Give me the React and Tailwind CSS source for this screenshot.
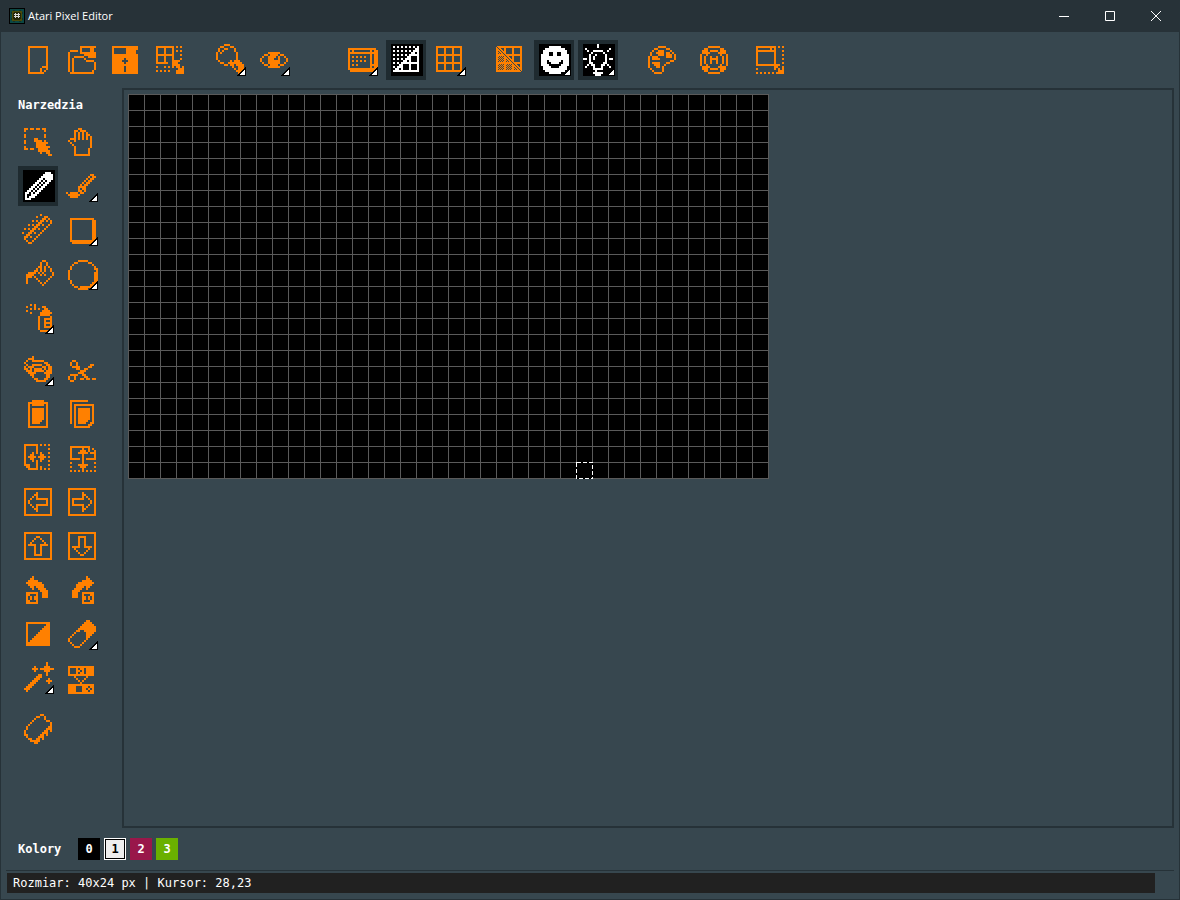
// File: App.jsx
// Purpose: Main window of the Atari Pixel Editor (title bar, toolbar, tools, canvas, colors, status)
import { useState } from 'react';
import clsx from 'clsx';

const COLS = 40;
const ROWS = 24;
const CELL = 16;

// 16x16 bitmaps, "#" is a lit pixel. Missing tail of a row / missing rows are empty.
const ICONS = {
    newFile: ['', '...##########', '...#........#', '...#........#', '...#........#', '...#........#', '...#........#', '...#........#', '...#........#', '...#........#', '...#........#', '...#......###', '...#.....#..#', '...#.....#.#', '...########'],
    open: ['', '.......########', '.......#....##', '..####.#....##', '.#.....########', '.#.......######', '.#..#####..####', '.#.#.....#', '.#.#......####', '.#.#..........#', '.#.#..........#', '.#.#..........#', '.#.#..........#', '.#.#.........#', '..############'],
    save: ['', '.#############', '.#......######', '.#......#####', '.#......#####', '.#############', '.#############', '.######.######', '.#####...#####', '.######.######', '.#############', '.######.######', '.######.######', '.######.######', '.#############'],
    resize: ['', '.#########.#.#', '.#...#...#', '.#...#...#.#.#', '.#...#...#', '.#########...#', '.#...#...#', '.#...#...#...#', '.#...#...####', '.######..###', '.........####', '.#...#.#.#.##.#', '............###', '.#.#.#.#...####', '...........####'],
    zoom: ['.....###', '...##...##', '..#..##...#', '..#.#.....#', '.#.#.......#', '.#.........#', '.#.........#', '.#.........#', '..#.....#.###', '...##..#######', '.....##.##.####', '.........#..###', '..........#.####', '...........#####', '............###'],
    eye: ['', '', '', '', '.....######', '...##.####.##', '..#..####.#..#', '.#...###..#...#', '.#...######...#', '..#..######..#', '...##.####.##', '.....######'],
    keyboard: ['', '', '.##############', '.#.#........#.##', '.###############', '.#..........#.##', '.#.#.#.#.#..#.##', '.#..........#.##', '.#.#.#.#.#..#.##', '.#..........#.##', '.#.#.#......####', '.#..........#.##', '.###############', '..##############'],
    snap: ['', '.#.#.#.#.#.#.#', '............##', '.#.#.#.#.#.###', '..........##.#', '.#.#.#.#.#####', '........##...#', '.#.#.#.###...#', '......##.#...#', '.#.#.#########', '....##...#...#', '.#.###...#...#', '..##.#...#...#', '.#############'],
    grid: ['', '.#############', '.#...#...#...#', '.#...#...#...#', '.#...#...#...#', '.#############', '.#...#...#...#', '.#...#...#...#', '.#...#...#...#', '.#############', '.#...#...#...#', '.#...#...#...#', '.#...#...#...#', '.#############'],
    smile: ['', '.....######', '...##########', '..############', '..###..##..###', '.####..##..####', '.##############', '.##############', '.###.######.###', '.###..####..###', '.####......####', '..####....####', '..############', '...##########', '.....######'],
    bulb: ['.......#', '.......#', '.#...........#', '..#..#####..#', '....#.....#', '...#..#....#', '...#.#.....#', '##.#.#.....#.##', '...#.......#', '...##.....##', '..#.##...##.#', '.#...#...#...#', '.....#####', '......#', '.....#####', '......###'],
    palette: ['', '......####', '....##....##', '...#..###...#', '..#..####.##.#', '..#...###.###.#', '.#.###....###.#', '.#.####.......#', '.#..........##', '.#.####...##', '.#..###..#', '.#...##.#', '..#.....#', '...#....#', '....####'],
    help: ['', '.....######', '...##......##', '..###.####.###', '..####....####', '.#..#......#..#', '.#.#..#..#..#.#', '.#.#..####..#.#', '.#.#..#..#..#.#', '.#.#..#..#..#.#', '.#..#......#..#', '..####....####', '..###.####.###', '...##......##', '.....######'],
    windowSize: ['', '.##########.#.#', '.#......#.#', '.##########...#', '.#........#', '.#........#...#', '.#........#', '.#........#...#', '.#........#', '.#........#...#', '.############', '..........##..#', '.#........#.#.#', '............###', '.#.#.#.#.#.####'],
    select: ['', '.##.##.##.##', '.#.........#', '', '.#.........#', '.#.........#', '......##', '.#....####.#', '.#.....######', '.......#####', '.#.....#######', '.##.##..#####', '........######', '.........#..##', '.............##'],
    hand: ['', '......##', '....##.###', '....#.#.#.#', '....#.#.#.##', '....#.#.#.#.#', '..###.#.#.#.#', '.#..#.......#', '..#.........#', '...#........#', '....#.......#', '....#......#', '....#......#', '....#......#', '....########'],
    pencil: ['', '...........###', '..........#####', '.........######', '........##.####', '.......##.#.##', '......##.#.##', '.....##.#.##', '....##.#.##', '...##.#.##', '..##.#.##', '.##.#.##', '.#..###', '.#.###', '.###'],
    brush: ['', '', '............##', '...........#.##', '..........#.##', '.........#.##', '........#.##', '.......#.##', '......####', '......#.##', '......##.#', '#.####.##', '.######', '..####'],
    ruler: ['.........#', '.......#...##', '..........##.#', '.....#.#.##.#.#', '........##....#', '...#.#.##.#..#', '......##....#', '.#.#.##.#..#', '....##....#', '#..##.#..#', '..##....#', '.##.#..#', '.#....#', '..#..#', '...##'],
    rect: ['', '', '..############', '..#..........##', '..#..........##', '..#..........##', '..#..........##', '..#..........##', '..#..........##', '..#..........##', '..#..........##', '..#..........##', '..#..........##', '..#############', '...############'],
    bucket: ['', '..........##', '.........#..#', '.........#..#', '........##.#.#', '.......#.#.#..#', '......##.#.#..#', '...####.#.#....#', '..####...#.#...#', '..###.#.......#', '..#....#.....#', '..#.....#...#', '..#......#.#', '..........#'],
    circle: ['', '......#####', '....##.....##', '...#.........#', '..#...........#', '..#...........##', '.#.............#', '.#............##', '.#............##', '.#............##', '.#............##', '..#...........##', '..#..........###', '...#........###', '....##.######', '......#####'],
    spray: ['', '....#.#', '..#...#...##', '....#.#.#..##', '..#.......####', '....#....######', '.........#####', '........#.....#', '........#..####', '........#..#..#', '........#..####', '........#..#..#', '........#..####', '........#', '.........####'],
    undo: ['', '.....#', '...###', '..#..######', '.#.........##', '..#..#####..##', '.#.###....##.##', '.##.#.####.#.##', '..###.#####.###', '...####....####', '....##......##', '.....#......##', '......##...##', '.......#####'],
    cut: ['', '', '', '...##', '..#..#', '..#..#......##', '...####....##', '.....##..##', '.......###', '......###', '..####..##', '.#..#....##', '.#..#..##.##.##', '..##'],
    paste: ['', '.....######', '...##########', '...#.######.#', '...#........#', '...#.######.#', '...#.######.#', '...#.######.#', '...#.######.#', '...#.######.#', '...#.######.#', '...#.#####..#', '...#.####...#', '...#........#', '...##########'],
    copy: ['', '..#########', '..#', '..#.##########', '..#.#........#', '..#.#.######.#', '..#.#.######.#', '..#.#.######.#', '..#.#.######.#', '..#.#.######.#', '..#.#.######.#', '..#.#.#####..#', '..#.#.####..##', '....#......##', '....########'],
    flipH: ['', '.#######.#.#.#', '.#.....#', '.#.....#.....#', '.#.....#', '.#...#.#.#...#', '.#..##...##', '.#.####.####.#', '.#..##...##', '.#...#.#.#...#', '.#.....#', '.###...#.....#', '..##...#.#', '...#####.#.#.#'],
    flipV: ['', '', '..##########', '..#.....#..#.#', '..#....###.#..#', '..#...#####.###', '..#.....#.....#', '..#.....#.....#', '..#####.#.#####', '........#', '..#.....#.....#', '......#####', '..#....###....#', '........#', '..#.#.#.#.#.#.#'],
    arrow: ['', '.##############', '.#............#', '.#.....#......#', '.#....##......#', '.#...#.#......#', '.#..#..######.#', '.#.#........#.#', '.#.#........#.#', '.#..#..######.#', '.#...#.#......#', '.#....##......#', '.#.....#......#', '.#............#', '.##############'],
    rotate: ['', '.....#', '....##', '...#####', '..########', '...########', '....##.####', '.....#..####', '.........####', '..######..###', '..##...#..###', '..#.#.##..###', '..#.#.##', '..##...#', '..######'],
    invert: ['', '', '..############', '..#.........##', '..#........###', '..#.......####', '..#......#####', '..#.....######', '..#....#######', '..#...########', '..#..#########', '..#.##########', '..############', '..############'],
    eraser: ['', '..........##', '.........####', '........######', '.......########', '......#########', '.....##..######', '....#.....####', '...#......###', '..#.......##', '.#........#', '.#.......#', '..#.....#', '...#...#', '....###'],
    wand: ['............#', '............#', '......#....###', '.....###.#######', '......#....###', '............#', '........##..#', '.......###', '......###....#', '.....###....###', '....###......#', '...###', '..###', '.###', '..#'],
    swap: ['', '', '.#############', '.#...#.##.####', '.#...##.#.####', '.#...#.##.####', '.#############', '....#.....#', '.....#...#', '......#.#', '.......#', '.#############', '.####...###.##', '.####...##.#.#', '.####...###.##', '.#############'],
    clear: ['', '.........##', '.......##..#', '......#....#', '.....#......##', '....#.........#', '...#..........#', '..#..........##', '..#.........###', '.#.........##.#', '.#........###', '.##......##.#', '..#.....###', '...##..##.#', '....#####', '......##'],
};

// One path per icon, built from horizontal runs of lit pixels
const toPath = (rows) => {
    let d = '';
    rows.forEach((row, y) => {
        for (const run of row.matchAll(/#+/g)) {
            const n = run[0].length;
            d += `M${run.index} ${y}h${n}v1h-${n}z`;
        }
    });
    return d;
};

// Mixed grid icon uses single screen pixels instead of double ones
const mixedGridPath = () => {
    let d = '';
    for (let y = 0; y < 26; y++) {
        for (let x = 0; x < 26; x++) {
            const line = (x >> 1) % 4 === 0 || (y >> 1) % 4 === 0;
            const lower = y > x && (x + y) % 2 === 0;
            const near = Math.abs(x - y) <= 2;
            if (x !== y && (near || line || lower)) {
                d += `M${x + 2} ${y + 2}h1v1h-1z`;
            }
        }
    }
    return d;
};

const TOOLBAR = [
    { id: 'newFile', label: 'Nowy' },
    { id: 'open', label: 'Otworz' },
    { id: 'save', label: 'Zapisz' },
    { id: 'resize', label: 'Zmien rozmiar' },
    { id: 'zoom', label: 'Powieksz', menu: true, space: 'ml-4' },
    { id: 'eye', label: 'Podglad', menu: true },
    { id: 'keyboard', label: 'Tryb', menu: true, space: 'ml-11' },
    { id: 'snap', label: 'Siatka pomocnicza', toggle: true },
    { id: 'grid', label: 'Siatka', menu: true },
    { id: 'mixed', label: 'Kratka', space: 'ml-4' },
    { id: 'smile', label: 'Znaki', menu: true, toggle: true },
    { id: 'bulb', label: 'Podpowiedzi', menu: true, toggle: true },
    { id: 'palette', label: 'Paleta', space: 'ml-5' },
    { id: 'help', label: 'Pomoc', space: 'ml-2' },
    { id: 'windowSize', label: 'Rozmiar okna', space: 'ml-3' },
];

const DRAW_TOOLS = [
    { id: 'select', label: 'Zaznacz' },
    { id: 'hand', label: 'Przesun' },
    { id: 'pencil', label: 'Olowek' },
    { id: 'brush', label: 'Pedzel', menu: true },
    { id: 'ruler', label: 'Linia' },
    { id: 'rect', label: 'Prostokat', menu: true },
    { id: 'bucket', label: 'Wypelnij' },
    { id: 'circle', label: 'Okrag', menu: true },
    { id: 'spray', label: 'Spray', menu: true },
];

const EDIT_TOOLS = [
    { id: 'undo', label: 'Cofnij', menu: true },
    { id: 'cut', label: 'Wytnij' },
    { id: 'paste', label: 'Wklej' },
    { id: 'copy', label: 'Kopiuj' },
    { id: 'flipH', label: 'Odbij w poziomie' },
    { id: 'flipV', label: 'Odbij w pionie' },
    { id: 'left', icon: 'arrow', label: 'W lewo' },
    { id: 'right', icon: 'arrow', label: 'W prawo', turn: 'rotate-180' },
    { id: 'up', icon: 'arrow', label: 'W gore', turn: 'rotate-90' },
    { id: 'down', icon: 'arrow', label: 'W dol', turn: '-rotate-90' },
    { id: 'rotateLeft', icon: 'rotate', label: 'Obroc w lewo' },
    { id: 'rotateRight', icon: 'rotate', label: 'Obroc w prawo', turn: '-scale-x-100' },
    { id: 'invert', label: 'Negatyw' },
    { id: 'eraser', label: 'Gumka', menu: true },
    { id: 'wand', label: 'Efekty', menu: true },
    { id: 'swap', label: 'Zamien kolory' },
];

const COLORS = [
    { n: 0, style: 'bg-black text-white' },
    { n: 1, style: 'bg-[#eeeeee] text-black' },
    { n: 2, style: 'bg-[#99174a] text-white' },
    { n: 3, style: 'bg-[#6ab000] text-white' },
];

function IconButton({ id, icon, label, menu, space, turn, active, onClick }) {
    return (
        <button
            type="button"
            aria-label={label}
            aria-pressed={active}
            onClick={onClick}
            className={clsx('relative h-10 w-10 shrink-0 py-1 pr-[3px]', active ? 'bg-[#1f2b30] pl-[5px] text-white' : 'pl-1 text-[#ff8000]', space)}
        >
            <svg viewBox={id === 'mixed' ? '0 0 32 32' : '0 0 16 16'} shapeRendering="crispEdges" className={clsx('block h-8 w-8', active && 'bg-black', turn)}>
                <path fill="currentColor" d={id === 'mixed' ? mixedGridPath() : toPath(ICONS[icon || id])} />
            </svg>
            {menu && (
                <svg viewBox="0 0 9 9" shapeRendering="crispEdges" className={clsx('absolute bottom-1 h-[9px] w-[9px]', active ? 'right-[3px]' : 'right-1')}>
                    <path fill="#000" d="M8 0h1v9H0v-1h1v-1h1v-1h1v-1h1v-1h1v-1h1v-1h1v-1h1z" />
                    <path fill="#fff" d="M7 3h1v5H3v-1h1v-1h1v-1h1v-1h1z" />
                </svg>
            )}
        </button>
    );
}

function AppIcon() {
    return (
        <svg viewBox="0 0 16 16" shapeRendering="crispEdges" className="h-4 w-4">
            <path fill="#000" d="M0 0h16v16H0z" />
            <path fill="#0b4743" d="M1 1h14v14H1z" />
            <path fill="#12302c" d="M2 4h1v2H2zM4 2h2v1H4zM10 2h2v1h-2zM13 4h1v2h-1zM13 10h1v2h-1zM2 10h1v2H2zM4 13h2v1H4zM10 13h2v1h-2z" />
            <path fill="#4b4a08" d="M3 3h10v10H3z" />
            <path fill="#252508" d="M5 4h6v1h1v6h-1v1H5v-1H4V5h1z" />
            <path fill="#d8d8d8" d="M6 5h1v1h2V5h1v1h1v1h-1v1h1v1h-1v1H9V9H7v1H6V9H5V8h1V7H5V6h1zM7 7v1h2V7z" />
        </svg>
    );
}

function TitleBar() {
    const button = 'flex h-8 w-[46px] items-center justify-center';
    return (
        <header className="flex h-8 items-center bg-[#273238] pr-px pl-[9px] text-white">
            <AppIcon />
            <h1 className="ml-[3px] flex-1 font-['Open_Sans','Noto_Sans',sans-serif] text-[11px] leading-4">Atari Pixel Editor</h1>
            <button type="button" aria-label="Minimalizuj" className={button}>
                <svg viewBox="0 0 10 10" className="h-[10px] w-[10px]"><path fill="currentColor" d="M0 5h10v1H0z" /></svg>
            </button>
            <button type="button" aria-label="Maksymalizuj" className={button}>
                <svg viewBox="0 0 10 10" className="h-[10px] w-[10px]"><path fill="none" stroke="currentColor" d="M.5.5h9v9h-9z" /></svg>
            </button>
            <button type="button" aria-label="Zamknij" className={button}>
                <svg viewBox="0 0 10 10" className="h-[10px] w-[10px]"><path fill="none" stroke="currentColor" d="M0 0l10 10M10 0L0 10" /></svg>
            </button>
        </header>
    );
}

export default function App() {
    const [tool, setTool] = useState('pencil');
    const [color, setColor] = useState(1);
    const [toggles, setToggles] = useState({ snap: true, smile: true, bulb: true });
    const [cursor, setCursor] = useState({ x: 28, y: 23 });

    const handleMove = (e) => {
        const box = e.currentTarget.getBoundingClientRect();
        setCursor({
            x: Math.min(COLS - 1, Math.floor((e.clientX - box.left) / CELL)),
            y: Math.min(ROWS - 1, Math.floor((e.clientY - box.top) / CELL)),
        });
    };

    return (
        <div className="flex min-h-screen flex-col bg-[#37474f] font-['DejaVu_Sans_Mono','Liberation_Mono',monospace] text-xs text-white">
            <TitleBar />

            <div className="flex flex-1 flex-col border-x border-b border-[#263238]">
                <nav className="flex gap-1 py-2 pl-[17px]">
                    {TOOLBAR.map(({ toggle, ...item }) => (
                        <IconButton
                            key={item.id}
                            {...item}
                            active={toggle && toggles[item.id]}
                            onClick={() => toggle && setToggles({ ...toggles, [item.id]: !toggles[item.id] })}
                        />
                    ))}
                </nav>

                <main className="flex flex-1 pr-[5px]">
                    <aside className="w-[121px] shrink-0 pl-[17px]">
                        <h2 className="py-[9px] leading-4 font-bold">Narzedzia</h2>
                        <div className="grid grid-cols-[40px_40px] gap-1">
                            {DRAW_TOOLS.map((item) => (
                                <IconButton key={item.id} {...item} active={tool === item.id} onClick={() => setTool(item.id)} />
                            ))}
                        </div>
                        <div className="mt-3 grid grid-cols-[40px_40px] gap-1">
                            {EDIT_TOOLS.map((item) => (
                                <IconButton key={item.id} {...item} />
                            ))}
                        </div>
                        <div className="mt-[10px]">
                            <IconButton id="clear" label="Wyczysc" />
                        </div>
                    </aside>

                    <section className="min-w-0 flex-1 overflow-auto border-2 border-[#263238] p-1">
                        <div
                            onMouseMove={handleMove}
                            className="relative h-[385px] w-[641px] bg-black bg-[linear-gradient(to_right,#5a5a5a_1px,transparent_1px),linear-gradient(to_bottom,#5a5a5a_1px,transparent_1px)] bg-[size:16px_16px]"
                        >
                            <svg
                                viewBox="0 0 17 17"
                                shapeRendering="crispEdges"
                                className="absolute h-[17px] w-[17px]"
                                style={{ left: cursor.x * CELL, top: cursor.y * CELL }}
                            >
                                <path fill="none" stroke="#000" d="M.5.5h16v16H.5z" />
                                <path fill="none" stroke="#fff" strokeDasharray="4 2" d="M.5.5h16v16H.5z" />
                            </svg>
                        </div>
                    </section>
                </main>

                <div className="flex items-center gap-1 py-[10px] pl-[17px]">
                    <h2 className="w-14 leading-4 font-bold">Kolory</h2>
                    {COLORS.map((c) => (
                        <button
                            key={c.n}
                            type="button"
                            aria-pressed={color === c.n}
                            onClick={() => setColor(c.n)}
                            className={clsx('h-[22px] w-[22px] leading-4 font-bold', c.style, color === c.n && 'border border-white inset-ring inset-ring-black')}
                        >
                            {c.n}
                        </button>
                    ))}
                </div>

                <footer className="ml-[5px] mr-[5px] border-t border-[#263238] pt-[2px] pr-[19px] pb-[6px] pl-px">
                    <p className="bg-[#212121] py-[2px] pl-[6px] leading-4">
                        Rozmiar: {COLS}x{ROWS} px | Kursor: {cursor.x},{cursor.y}
                    </p>
                </footer>
            </div>
        </div>
    );
}
